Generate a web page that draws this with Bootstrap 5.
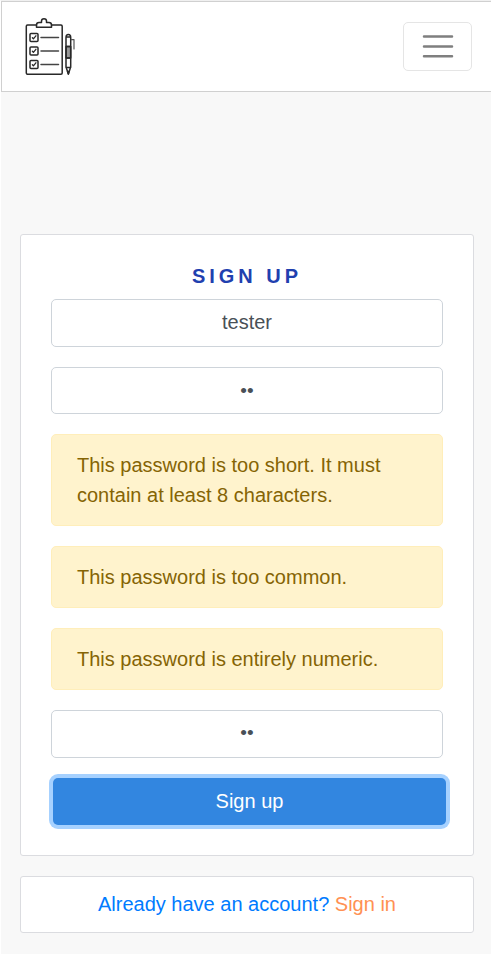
<!DOCTYPE html>
<html lang="en">
<head>
<meta charset="utf-8">
<meta name="viewport" content="width=device-width, initial-scale=1">
<title>Sign up</title>
<link href="https://cdn.jsdelivr.net/npm/bootstrap@5.3.0/dist/css/bootstrap.min.css" rel="stylesheet">
<style>
html { font-size: 20px; }
body { font-family: "Liberation Sans", Arial, sans-serif; background: #f8f8f8; color: #212529; border-left: 1px solid #fff; border-top: 1px solid #f0f0f0; overflow: hidden; min-height: 954px; }
.site-nav { height: 91px; padding: 0 19px 0 21px; border: 1px solid #d0d0d0; border-right: 0; }
.site-nav .navbar-brand { margin-bottom: 2px !important; }
.site-nav .navbar-toggler { width: 69px; height: 49px; padding: 0 0 2px; border: 1px solid #e5e5e5; border-radius: 5px; line-height: 1; }
.site-nav .navbar-toggler svg { display: block; margin: auto; }
.panel { border: 1px solid #dbdce0; border-radius: 3px; background: #fff; }
.page { padding: 142px 17px 0 19px; }
.signup { height: 622px; padding: 26px 30px 0; margin-bottom: 20px; }
.signup h1 { font-size: 20px; font-weight: 700; letter-spacing: 4px; line-height: 30px; margin: 0 0 8px; color: #1f40af; }
.signup .form-control { height: 48px; margin-bottom: 20px; padding: 6px 15px 8px; border-color: #ced4da; border-radius: 5px; color: #495057; }
.signup .form-control.pass { height: 47px; padding: 7px 15px; }
.signup .form-control.pass, .signup .form-control.confirm { font-size: 19px; }
.signup .alert { padding: 15px 25px; margin-bottom: 20px; border: 1px solid #ffeeba; border-radius: 5px; background: #fff3cd; color: #856404; line-height: 30px; }
.btn-signup, .btn-signup:hover { display: block; width: 393px; height: 47px; margin-left: 2px; padding: 0 0 2px; border: 0; border-radius: 5px; background: #3286e0; color: #fff; box-shadow: 0 0 0 4px #a6d1ff; }
.signin { height: 57px; line-height: 54px; }
.signin a { color: #007bff; }
.signin span { color: #ff9153; }
</style>
</head>
<body>
<nav class="navbar site-nav bg-white d-flex justify-content-between">
  <a class="navbar-brand p-0 m-0" href="#" aria-label="Home">
    <svg class="d-block" width="54" height="60" viewBox="23 16 54 60" fill="none" stroke="#292929" stroke-width="1.5" stroke-linejoin="round" stroke-linecap="round">
      <path d="M36.5 25H27.5q-1.2 0-1.2 1.2V73q0 1.2 1.2 1.2H61q1.2 0 1.2-1.2V26.2q0-1.2-1.2-1.2H51.5"/>
      <path d="M36.5 27.2V25q0-2.500 2.500-2.500h2.500v-1.500q0-2.300 2.500-2.300t2.500 2.300v1.500h2.500q2.500 0 2.500 2.500v2.200z"/>
      <g><rect x="30" y="33.400" width="8" height="8" rx="1"/><rect x="30" y="46.900" width="8" height="8" rx="1"/><rect x="30" y="60.400" width="8" height="8" rx="1"/></g>
      <path stroke-width="1.300" d="M32.400 37.800l1 1 2.500-3M32.400 51.300l1 1 2.500-3M32.400 64.800l1 1 2.500-3"/>
      <path stroke="#444" d="M41 37.500h17.500M41 51h17.500M41 64.400h17.500"/>
      <rect x="66" y="46.500" width="4.700" height="11.500" fill="#999"/>
      <path d="M66 37.500q0-3 2.350-3t2.350 3V67L68.350 74 66 67zM66 37h4.700M66 46.500h4.700M66 58h4.700M66 67.500h4.700"/>
      <path d="M67.600 71.500h1.400L68.350 74z" fill="#292929"/>
      <path stroke="#555" stroke-width="1.200" d="M71.300 39.700h2.700V49"/>
    </svg>
  </a>
  <button class="navbar-toggler" type="button" aria-label="Toggle navigation">
    <svg width="32" height="32" viewBox="0 0 32 32" stroke="#7f7f7f" stroke-width="2.500" stroke-linecap="round"><path d="M2 6.500h28M2 16.500h28M2 26.300h28"/></svg>
  </button>
</nav>
<main class="page">
  <form class="panel signup">
    <h1 class="text-center">SIGN UP</h1>
    <input class="form-control text-center" type="text" value="tester" aria-label="Username">
    <input class="form-control pass text-center" type="text" value="••" aria-label="Password">
    <div class="alert">This password is too short. It must contain at least 8 characters.</div>
    <div class="alert">This password is too common.</div>
    <div class="alert">This password is entirely numeric.</div>
    <input class="form-control confirm text-center" type="text" value="••" aria-label="Confirm password">
    <button class="btn btn-signup" type="button">Sign up</button>
  </form>
  <div class="panel signin text-center"><a class="text-decoration-none" href="#">Already have an account? <span>Sign in</span></a></div>
</main>
<script src="https://cdn.jsdelivr.net/npm/bootstrap@5.3.0/dist/js/bootstrap.bundle.min.js"></script>
</body>
</html>
